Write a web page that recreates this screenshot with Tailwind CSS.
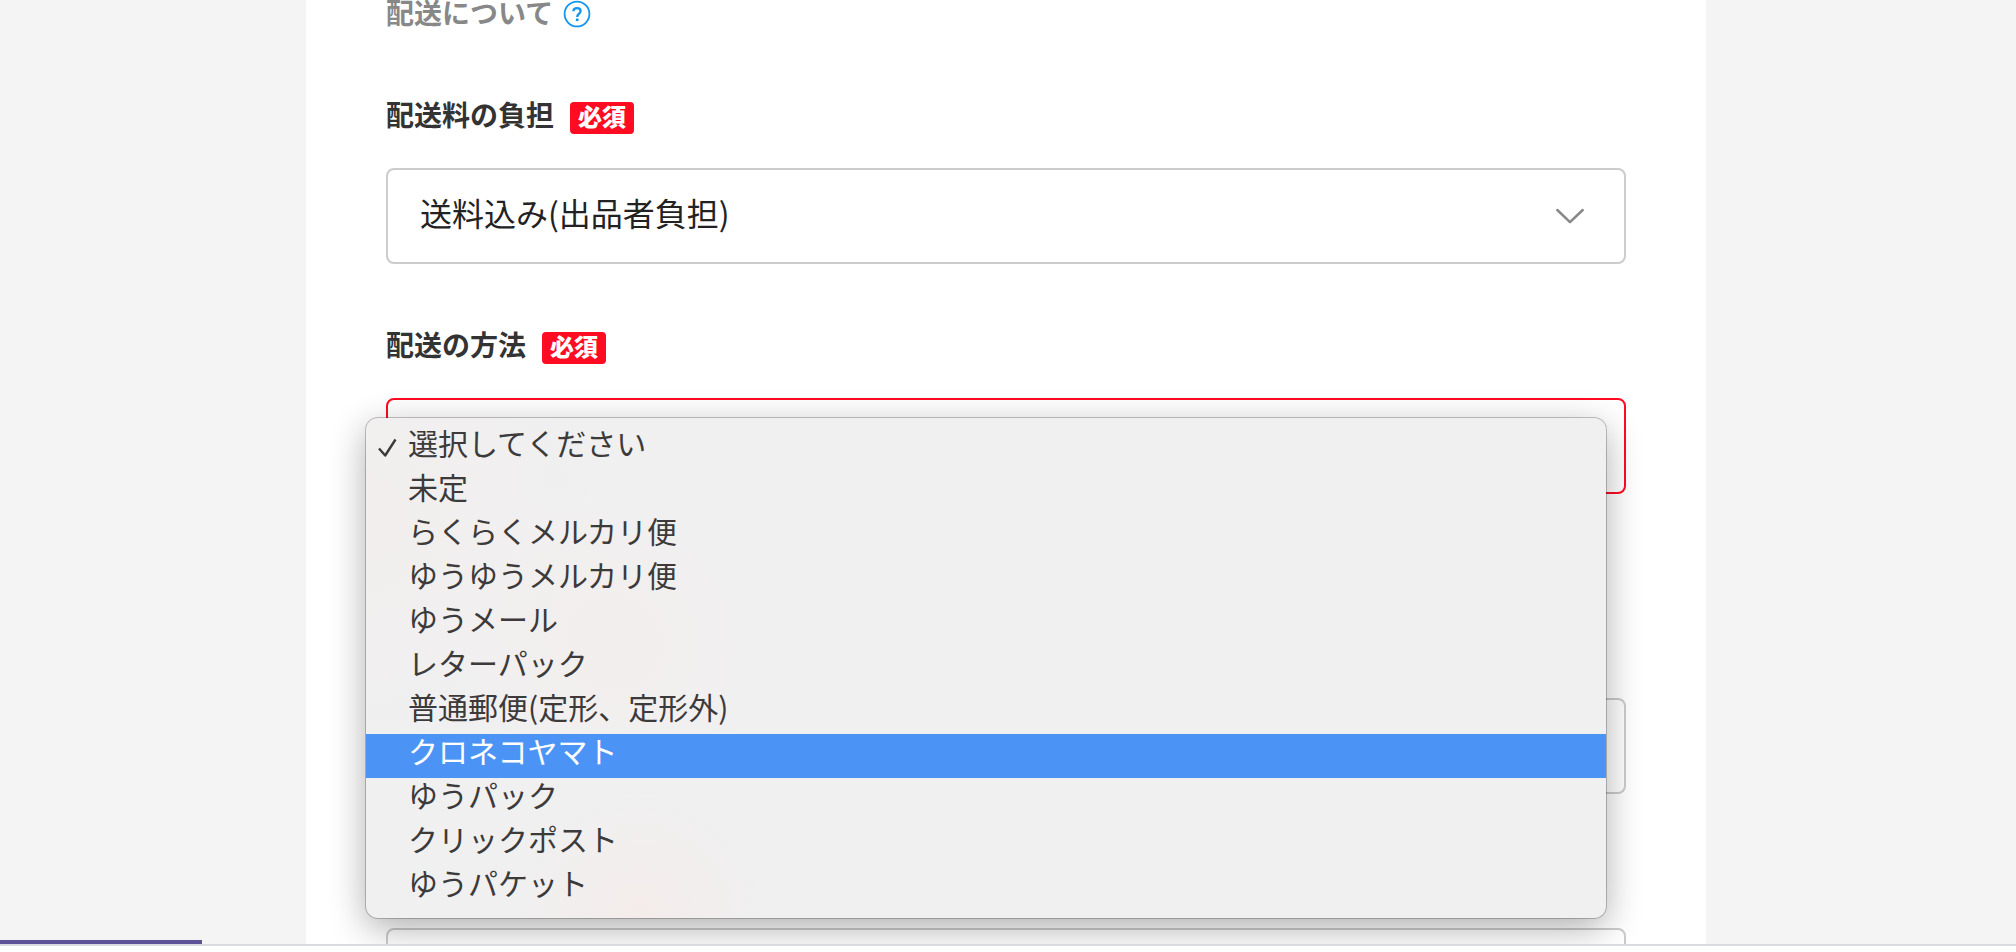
<!DOCTYPE html>
<html lang="ja">
  <head>
    <meta charset="UTF-8" />
    <meta name="viewport" content="width=device-width, initial-scale=1.0" />
    <script src="https://cdn.jsdelivr.net/npm/@tailwindcss/browser@4"></script>
    <title>商品の出品</title>
  </head>
  <body
    class="h-screen flex flex-col overflow-hidden bg-[#f4f4f4] font-['Noto_Sans_CJK_JP',sans-serif] text-[#333]"
  >
    <main class="flex-1 min-h-0 overflow-hidden flex flex-col">
      <div class="flex-1 min-h-0 pr-1">
        <section class="h-full max-w-[1400px] mx-auto px-20 bg-white">
          <!-- section title -->
          <div class="flex items-center gap-[10px] h-7">
            <h2 class="font-bold text-[28px] leading-6 pb-1 text-[#888]">
              配送について
            </h2>
            <a href="#" aria-label="配送についてのヘルプ">
              <svg class="size-7" viewBox="0 0 28 28" fill="none" stroke="#1296f0">
                <circle cx="14" cy="14" r="12.4" stroke-width="1.8" />
                <path
                  d="M10.4 11.2c.1-2 1.500-3.100 3.600-3.100s3.600 1.200 3.600 3c0 1.400-.8 2.100-1.800 2.900-1.100.8-1.600 1.400-1.600 2.900"
                  stroke-width="2.3"
                />
                <circle cx="14.200" cy="19.800" r="1.5" fill="#1296f0" stroke="none" />
              </svg>
            </a>
          </div>

          <form class="pt-[74px]">
            <!-- shipping payer -->
            <div class="mb-[68px]">
              <label for="payer" class="flex items-center gap-4 h-8 mb-[34px]">
                <span class="font-bold text-[28px] leading-7 pb-2">配送料の負担</span>
                <span class="px-2 pb-1 rounded bg-[#ff0b22] font-black text-2xl leading-7 text-white">必須</span>
              </label>
              <div class="relative">
                <select
                  id="payer"
                  class="block appearance-none w-full h-24 px-8 pb-2 border-2 border-[#ccc] rounded-lg bg-white text-[32px] text-[#222]"
                >
                  <option>送料込み(出品者負担)</option>
                </select>
                <svg
                  class="absolute right-10 top-8 size-8 pointer-events-none"
                  viewBox="0 0 32 32"
                  fill="none"
                  stroke="#888"
                  stroke-width="2.5"
                  stroke-linecap="round"
                  stroke-linejoin="round"
                >
                  <path d="M3.3 10 16 22.2 28.7 10" />
                </svg>
              </div>
            </div>

            <!-- shipping method -->
            <div class="mb-[204px]">
              <label for="method" class="flex items-center gap-4 h-8 mb-[34px]">
                <span class="font-bold text-[28px] leading-7 pb-2">配送の方法</span>
                <span class="px-2 pb-1 rounded bg-[#ff0b22] font-black text-2xl leading-7 text-white">必須</span>
              </label>
              <div class="relative">
                <select
                  id="method"
                  class="block appearance-none w-full h-24 px-8 pb-2 border-2 border-[#ff0b22] rounded-lg bg-white text-[32px] text-[#222]"
                ></select>
                <!-- opened menu -->
                <ul
                  role="listbox"
                  aria-label="配送の方法"
                  class="absolute z-10 top-5 -left-5 w-full py-2 rounded-xl bg-[#f0f0f0] bg-[radial-gradient(circle_at_22%_100%,#f4eceb_0,transparent_130px),radial-gradient(circle_at_20%_45%,#f3eeee_0,transparent_170px),radial-gradient(circle_at_0%_20%,#f2eeee_0,transparent_260px)] shadow-[0_0_0_1px_rgba(0,0,0,0.22),0_10px_36px_rgba(0,0,0,0.32)] text-[30px] leading-8 text-[#3c3a3a] *:h-11 *:pl-[42px]"
                >
                  <li role="option" aria-selected="true" class="relative">
                    <svg
                      class="absolute left-3 top-3 w-5 h-6"
                      viewBox="0 0 20 24"
                      fill="none"
                      stroke="#3c3a3a"
                      stroke-width="2.4"
                    >
                      <path d="M1 10.5 7.2 17.5 17.5 1.500" stroke-linejoin="round" />
                    </svg>
                    選択してください
                  </li>
                  <li role="option">未定</li>
                  <li role="option">らくらくメルカリ便</li>
                  <li role="option">ゆうゆうメルカリ便</li>
                  <li role="option">ゆうメール</li>
                  <li role="option">レターパック</li>
                  <li role="option">普通郵便(定形、定形外)</li>
                  <li role="option" class="bg-[#4b94f6] text-white">クロネコヤマト</li>
                  <li role="option">ゆうパック</li>
                  <li role="option">クリックポスト</li>
                  <li role="option">ゆうパケット</li>
                </ul>
              </div>
            </div>

            <!-- ship from -->
            <div class="mb-[134px]">
              <select
                aria-label="発送元の地域"
                class="block appearance-none w-full h-24 px-8 border-2 border-[#ccc] rounded-lg bg-white text-[32px] text-[#222]"
              ></select>
            </div>

            <!-- days to ship -->
            <div>
              <select
                aria-label="発送までの日数"
                class="block appearance-none w-full h-24 px-8 border-2 border-[#ccc] rounded-lg bg-white text-[32px] text-[#222]"
              ></select>
            </div>
          </form>
        </section>
      </div>
      <!-- loading bar -->
      <div class="relative shrink-0">
        <div class="absolute bottom-0 left-0 w-1/10 h-1 bg-[#5e5296]"></div>
      </div>
    </main>
    <footer class="shrink-0 h-2 border-t-2 border-[#dadae2] bg-white"></footer>
  </body>
</html>
